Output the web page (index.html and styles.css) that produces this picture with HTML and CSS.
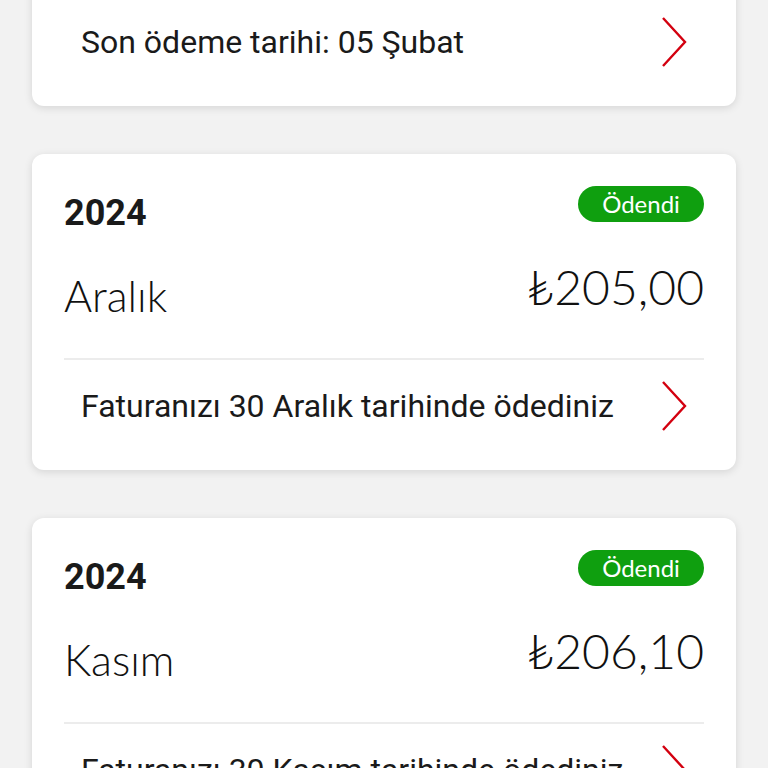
FILE: index.html
```html
<!DOCTYPE html>
<html lang="tr">
<head>
  <meta charset="UTF-8" />
  <meta name="viewport" content="width=device-width, initial-scale=1" />
  <title>Faturalarım</title>
  <link rel="stylesheet" href="styles.css">
</head>
<body>
  <div class="bill-list">

    <div class="bill-card">
      <div class="bill-head">
        <span class="bill-year">2025</span>
        <span class="badge badge-unpaid">Ödenmedi</span>
      </div>
      <div class="bill-main">
        <span class="bill-month">Ocak</span>
        <span class="bill-amount">₺205,00</span>
      </div>
      <a class="bill-link" href="#">
        <span>Son ödeme tarihi: 05 Şubat</span>
        <svg class="chevron" viewBox="0 0 26 50" width="26" height="50"><path d="M2 1 L24 25 L2 49" /></svg>
      </a>
    </div>

    <div class="bill-card">
      <div class="bill-head">
        <span class="bill-year">2024</span>
        <span class="badge">Ödendi</span>
      </div>
      <div class="bill-main">
        <span class="bill-month">Aralık</span>
        <span class="bill-amount">₺205,00</span>
      </div>
      <a class="bill-link" href="#">
        <span>Faturanızı 30 Aralık tarihinde ödediniz</span>
        <svg class="chevron" viewBox="0 0 26 50" width="26" height="50"><path d="M2 1 L24 25 L2 49" /></svg>
      </a>
    </div>

    <div class="bill-card">
      <div class="bill-head">
        <span class="bill-year">2024</span>
        <span class="badge">Ödendi</span>
      </div>
      <div class="bill-main">
        <span class="bill-month">Kasım</span>
        <span class="bill-amount">₺206,10</span>
      </div>
      <a class="bill-link" href="#">
        <span>Faturanızı 30 Kasım tarihinde ödediniz</span>
        <svg class="chevron" viewBox="0 0 26 50" width="26" height="50"><path d="M2 1 L24 25 L2 49" /></svg>
      </a>
    </div>

  </div>
</body>
</html>
```

FILE: styles.css
```css
* { box-sizing: border-box; }
html, body {
  margin: 0;
  padding: 0;
  background: #f2f2f2;
  font-family: Roboto, "Liberation Sans", sans-serif;
  color: #1a1a1a;
}
.bill-list {
  display: flex;
  flex-direction: column;
  gap: 48px;
  padding: 0 32px 40px;
  margin-top: -210px;
}
.bill-card {
  background: #fff;
  border-radius: 12px;
  box-shadow: 0 2px 8px rgba(0, 0, 0, 0.12);
  padding: 0 32px;
}
.bill-head {
  display: flex;
  justify-content: space-between;
  align-items: flex-start;
  height: 68px;
  padding-top: 32px;
}
.bill-year {
  font-size: 36px;
  line-height: 44px;
  font-weight: 700;
  margin-top: 5px;
}
.badge {
  height: 36px;
  min-width: 126px;
  padding: 0 24px;
  border-radius: 18px;
  background: #0f9f0f;
  color: #fff;
  font-family: Lato, "Open Sans", sans-serif;
  font-size: 24px;
  line-height: 36px;
  text-align: center;
}
.badge-unpaid {
  background: #e60000;
}
.bill-main {
  display: flex;
  justify-content: space-between;
  align-items: flex-start;
  height: 100px;
  margin-bottom: 36px;
  font-family: Lato, "Open Sans", sans-serif;
  font-weight: 300;
  color: #111;
}
.bill-month {
  font-size: 43px;
  line-height: 52px;
  margin-top: 48px;
}
.bill-amount {
  font-size: 48px;
  line-height: 56px;
  margin-top: 37px;
}
.bill-link {
  display: flex;
  justify-content: space-between;
  align-items: center;
  height: 112px;
  padding: 0 17px 18px;
  border-top: 2px solid #ececec;
  color: #1a1a1a;
  text-decoration: none;
  font-size: 32px;
}
.chevron {
  display: block;
  fill: none;
  stroke: #d3000f;
  stroke-width: 2.4;
}
```
